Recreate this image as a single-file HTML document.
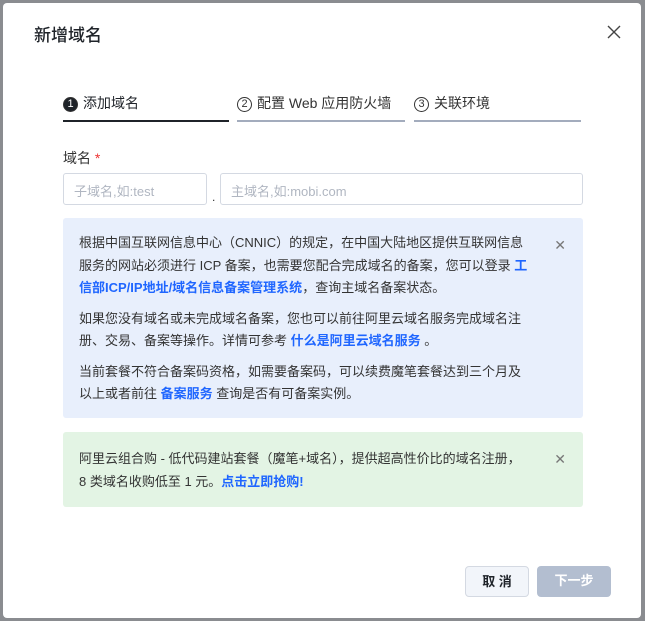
<!DOCTYPE html>
<html><head><meta charset="utf-8"><style>
*{margin:0;padding:0;box-sizing:border-box}
body{width:645px;height:621px;background:#8a8c90;font-family:"Liberation Sans","Noto Sans CJK SC",sans-serif;position:relative;overflow:hidden}
.dlg{position:absolute;left:3px;top:3px;width:638px;height:615px;background:#fff;border-radius:4px}
.t{position:absolute;left:31px;top:18px;font-size:17px;color:#1f2329;font-weight:500}
.x{position:absolute;left:604px;top:22px}
.step{position:absolute;top:90px;font-size:14px;color:#1f2329;height:30px}
.step .bar{position:absolute;left:0;right:0;top:27px;height:2px;background:#a3acbd}
.num{display:inline-block;width:15px;height:15px;border-radius:50%;border:1px solid #333;font-size:11px;line-height:13px;text-align:center;vertical-align:1px;margin-right:5px}
.lbl{position:absolute;left:60px;top:145px;font-size:14px;color:#333}
.in{position:absolute;top:170px;height:32px;border:1px solid #d4d9e2;border-radius:3px;font-size:13px;color:#b0b6c1;padding:7px 10px}
.box{position:absolute;left:60px;width:520px;border-radius:3px;font-size:13px;color:#333;line-height:22.5px;padding:14px 52px 10px 16px}
.box p{margin-bottom:8px}
a{color:#1f66ff;font-weight:bold;text-decoration:none}
.cl{position:absolute;right:17px;top:16px;color:#777;font-size:14px}
.btn{position:absolute;top:563px;height:31px;border-radius:4px;font-size:13px;font-weight:bold;text-align:center;line-height:29px}
</style></head><body><div class="dlg">
<div class="t">新增域名</div>
<svg class="x" width="14" height="14" viewBox="0 0 14 14"><path d="M1 1L13 13M13 1L1 13" stroke="#444" stroke-width="1.4"/></svg>
<div class="step" style="left:60px;width:166px"><span class="num" style="background:#1f2329;color:#fff">1</span>添加域名<div class="bar" style="background:#1f2329"></div></div>
<div class="step" style="left:234px;width:168px;color:#333"><span class="num">2</span>配置 Web 应用防火墙<div class="bar"></div></div>
<div class="step" style="left:411px;width:167px;color:#333"><span class="num">3</span>关联环境<div class="bar"></div></div>
<div class="lbl">域名 <span style="color:#e33">*</span></div>
<div class="in" style="left:60px;width:144px">子域名,如:test</div>
<div style="position:absolute;left:209px;top:187px;font-size:12px;color:#333">.</div>
<div class="in" style="left:217px;width:363px">主域名,如:mobi.com</div>
<div class="box" style="top:215px;height:200px;background:#e8effc">
<p>根据中国互联网信息中心（CNNIC）的规定，在中国大陆地区提供互联网信息服务的网站必须进行 ICP 备案，也需要您配合完成域名的备案，您可以登录 <a>工信部ICP/IP地址/域名信息备案管理系统</a>，查询主域名备案状态。</p>
<p>如果您没有域名或未完成域名备案，您也可以前往阿里云域名服务完成域名注册、交易、备案等操作。详情可参考 <a>什么是阿里云域名服务</a> 。</p>
<p>当前套餐不符合备案码资格，如需要备案码，可以续费魔笔套餐达到三个月及以上或者前往 <a>备案服务</a> 查询是否有可备案实例。</p>
<span class="cl">✕</span></div>
<div class="box" style="top:429px;height:75px;background:#e3f4e4;padding-top:16px">阿里云组合购 - 低代码建站套餐（魔笔+域名），提供超高性价比的域名注册，<br>8 类域名收购低至 1 元。<a>点击立即抢购!</a><span class="cl">✕</span></div>
<div class="btn" style="left:462px;width:64px;border:1px solid #d4d9e2;background:#f2f5fa;color:#1f2329">取 消</div>
<div class="btn" style="left:534px;width:74px;background:#b3bed0;color:#fff">下一步</div>
</div></body></html>
